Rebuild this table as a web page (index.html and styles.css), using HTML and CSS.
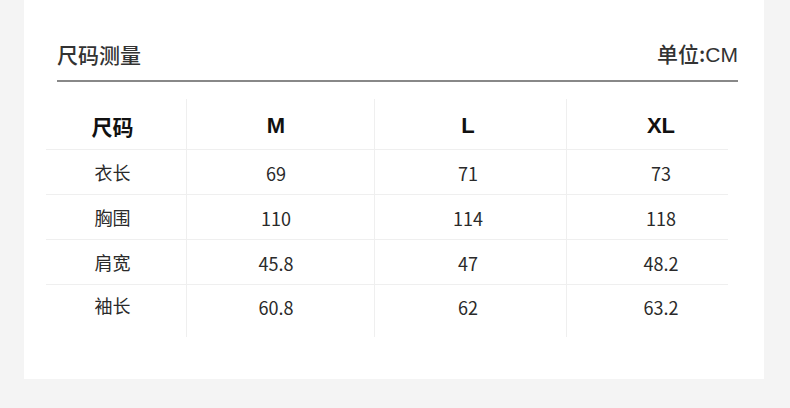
FILE: index.html
```html
<!DOCTYPE html>
<html lang="zh">
<head>
<meta charset="utf-8">
<link rel="stylesheet" href="styles.css">
</head>
<body>
<div class="card">
  <div class="head">
    <div class="title">尺码测量</div>
    <div class="unit">单位:<span class="latin">CM</span></div>
  </div>
  <div class="rule"></div>
  <div class="table">
    <div class="cell c1 th">尺码</div>
    <div class="cell c2 th latin">M</div>
    <div class="cell c3 th latin">L</div>
    <div class="cell c4 th latin">XL</div>

    <div class="cell c1">衣长</div>
    <div class="cell c2 num">69</div>
    <div class="cell c3 num">71</div>
    <div class="cell c4 num">73</div>

    <div class="cell c1">胸围</div>
    <div class="cell c2 num">110</div>
    <div class="cell c3 num">114</div>
    <div class="cell c4 num">118</div>

    <div class="cell c1">肩宽</div>
    <div class="cell c2 num">45.8</div>
    <div class="cell c3 num">47</div>
    <div class="cell c4 num">48.2</div>

    <div class="cell c1 last">袖长</div>
    <div class="cell c2 num last">60.8</div>
    <div class="cell c3 num last">62</div>
    <div class="cell c4 num last">63.2</div>
  </div>
</div>
</body>
</html>
```

FILE: styles.css
```css
html, body {
  margin: 0;
  padding: 0;
  background: #f4f4f4;
}
body {
  font-family: "Noto Sans CJK SC", "Noto Sans", sans-serif;
  color: #333;
}
.card {
  margin-left: 24px;
  width: 740px;
  height: 379px;
  background: #fff;
  box-sizing: border-box;
  padding-top: 39px;
}
.head {
  display: flex;
  justify-content: space-between;
  align-items: center;
  height: 30px;
  padding: 0 26px 0 33px;
  margin-bottom: 11px;
}
.title {
  font-size: 21px;
  font-weight: 500;
  color: #333;
  line-height: 30px;
}
.unit {
  font-size: 21px;
  font-weight: 500;
  color: #333;
  line-height: 30px;
}
.unit .latin {
  font-weight: 400;
}
.latin {
  font-family: "Liberation Sans", Arial, sans-serif;
}
.rule {
  height: 2px;
  background: #888;
  margin: 0 26px 0 33px;
}
.table {
  margin: 17px 0 0 22px;
  display: grid;
  grid-template-columns: 141px 188px 192px 161px;
  grid-auto-rows: 45px;
  grid-template-rows: 51px;
}
.cell {
  display: flex;
  align-items: center;
  justify-content: center;
  border-bottom: 1px solid #efefef;
  font-size: 18px;
  color: #2a2a2a;
  box-sizing: border-box;
}
.c1 { border-right: 1px solid #efefef; padding-right: 7px; }
.c2 { border-right: 1px solid #efefef; padding-right: 9px; }
.c3 { border-right: 1px solid #efefef; padding-right: 5px; }
.c4 { padding-left: 27px; }
.th {
  font-size: 21px;
  font-weight: 700;
  color: #111;
  padding-top: 3px;
}
.th.latin {
  font-size: 22px;
}
.num {
  padding-top: 1px;
}
.last {
  border-bottom: none;
  height: 52px;
  align-items: flex-start;
  padding-top: 7px;
}
.num.last { padding-top: 9px; }
```
